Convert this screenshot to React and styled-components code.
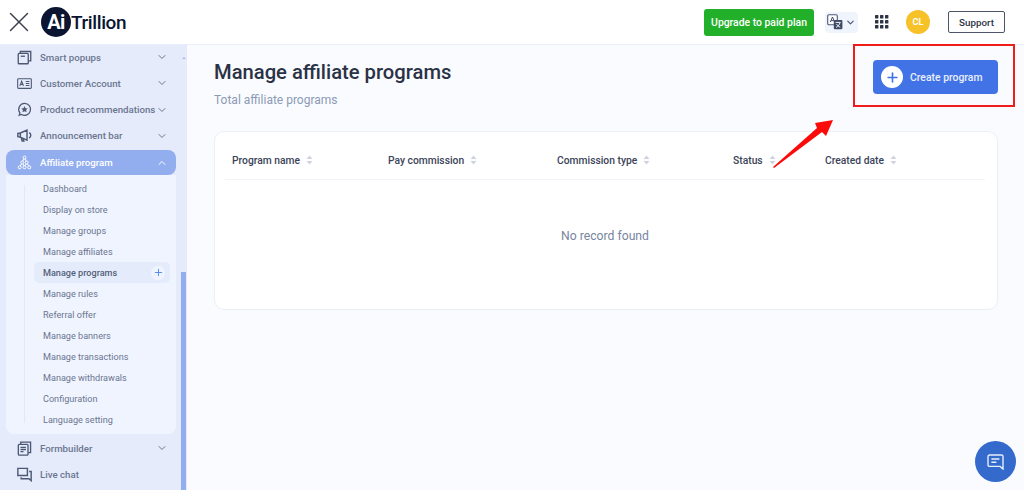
import React from "react";
import styled, { createGlobalStyle } from "styled-components";
import { ChevronDown, ChevronUp, Plus, X } from "lucide-react";

const GlobalStyle = createGlobalStyle`
  html, body {
    margin: 0;
    padding: 0;
    height: 490px;
    overflow: hidden;
    background: #fafbff;
    font-family: Roboto, "Liberation Sans", sans-serif;
  }
`;

const subItems = [
  "Dashboard",
  "Display on store",
  "Manage groups",
  "Manage affiliates",
  "Manage programs",
  "Manage rules",
  "Referral offer",
  "Manage banners",
  "Manage transactions",
  "Manage withdrawals",
  "Configuration",
  "Language setting"
];

const columns = [
  { label: "Program name", width: 156 },
  { label: "Pay commission", width: 169 },
  { label: "Commission type", width: 176 },
  { label: "Status", width: 92 },
  { label: "Created date", width: 150 }
];

const PopupIcon = () => (
  <svg viewBox="0 0 18 18" fill="none" stroke="#4d5874" strokeWidth="1.6">
    <rect x="1.5" y="4" width="12" height="12.5" rx="1" />
    <path d="M4 4V1.8h12.5V13h-3" />
    <path d="M4.5 7.5h5" />
  </svg>
);

const AccountIcon = () => (
  <svg viewBox="0 0 18 18" fill="none" stroke="#4d5874" strokeWidth="1.3">
    <rect x="0.8" y="3.2" width="16.4" height="11.6" rx="1" />
    <path d="M3.4 11.8 5.6 6.2l2.2 5.6M4.2 10h2.8M10.5 6.6h4.4M10.5 9h4.4M10.5 11.4h4.4" />
  </svg>
);

const StarBubbleIcon = () => (
  <svg viewBox="0 0 18 18" fill="none" stroke="#4d5874" strokeWidth="1.5">
    <path d="M9 1.6a7.2 7.2 0 1 1-3.6 13.4L2.6 16l.9-2.9A7.2 7.2 0 0 1 9 1.6Z" />
    <path fill="#4d5874" stroke="none" d="m9 4.8 1.2 2.6 2.8.3-2.1 1.9.6 2.8L9 11l-2.5 1.4.6-2.8L5 7.7l2.8-.3Z" />
  </svg>
);

const MegaphoneIcon = () => (
  <svg viewBox="0 0 18 18" fill="none" stroke="#4d5874" strokeWidth="1.7">
    <path d="M1 6.5v4l3 .5V6ZM4 6l8-3.5v12L4 11" />
    <path d="m5 11.2 1.2 4.3h2l-1-3.4" />
    <path d="M14.5 5.5a3.6 3.6 0 0 1 0 6.5" />
  </svg>
);

const NetworkIcon = () => (
  <svg viewBox="0 0 20 20" fill="none" stroke="#fff" strokeWidth="1.3">
    <circle cx="10" cy="3.4" r="2" />
    <circle cx="7" cy="10" r="2" />
    <circle cx="13" cy="10" r="2" />
    <circle cx="3.6" cy="16.4" r="2" />
    <circle cx="10" cy="16.4" r="2" />
    <circle cx="16.4" cy="16.4" r="2" />
    <path d="M9 5.2 7.8 8.2M11 5.2l1.2 3M6 11.8l-1.4 2.9M8 11.8l1.4 2.9M12 11.8l-1.4 2.9M14 11.8l1.4 2.9" />
  </svg>
);

const FormIcon = () => (
  <svg viewBox="0 0 18 18" fill="none" stroke="#4d5874" strokeWidth="1.6">
    <rect x="1.6" y="4" width="11.6" height="13" rx="1" />
    <path d="M4.5 4V1.4h11.8V14h-3" />
    <path d="M4.2 7.6h6.5M4.2 10.2h6.5M4.2 12.8h3.6" />
  </svg>
);

const ChatIcon = () => (
  <svg viewBox="0 0 18 18" fill="none" stroke="#4d5874" strokeWidth="1.7">
    <path d="M1 1.6h11.5v8.6H1Z" />
    <path d="M14.6 5.4h2.4v11l-2.6-2.4H5v-1.6" />
  </svg>
);

const TranslateIcon = () => (
  <svg width="16" height="16" viewBox="0 0 16 16">
    <rect x="0.7" y="0.7" width="9.6" height="10" rx="1.2" fill="#fff" stroke="#4d5874" strokeWidth="1.1" />
    <rect x="6.8" y="6" width="8.6" height="9.2" rx="1" fill="#3f4a66" />
    <path d="M3.4 8 5.5 3l2.1 5M4.2 6.6h2.6" fill="none" stroke="#3f4a66" strokeWidth="1" />
    <path d="M8.6 8.4h5M11 8v.6M13 8.6c-.6 2.4-2.2 4-4 4.8M9.6 10c.6 1.4 2 2.6 3.6 3.2" fill="none" stroke="#fff" strokeWidth="0.9" />
  </svg>
);

const GridIcon = () => (
  <svg width="14" height="14" viewBox="0 0 14 14" fill="#2d3446">
    {[0, 5, 10].map(y =>
      [0, 5, 10].map(x => <rect key={`${x}-${y}`} x={x} y={y} width="3.4" height="3.4" rx="0.5" />)
    )}
  </svg>
);

const SortIcon = () => (
  <svg width="7" height="10" viewBox="0 0 7 10" fill="#ced4df">
    <path d="M3.5 0.5 6.5 4H.5ZM3.5 9.5.5 6h6Z" />
  </svg>
);

const MessageIcon = () => (
  <svg width="17" height="16" viewBox="0 0 17 16" fill="none" stroke="#e7eefc" strokeWidth="1.4">
    <path d="M2.6 1h11.8a1.6 1.6 0 0 1 1.6 1.6V15l-3-2.6H2.6A1.6 1.6 0 0 1 1 10.8V2.6A1.6 1.6 0 0 1 2.6 1Z" />
    <path d="M4.4 5h8M4.4 8.2h5" />
  </svg>
);

const ArrowDrawing = () => (
  <svg width="62" height="50" viewBox="0 0 62 50">
    <path fill="#fb0a0a" d="M0 48 44 9 42 4 60 1 53 17 49 13 1 49Z" />
  </svg>
);

const NavRow = ({ icon, label, open, active }) => (
  <NavItem $active={active}>
    <NavIcon>{icon}</NavIcon>
    <NavLabel $active={active}>{label}</NavLabel>
    {open === undefined ? null : open ? (
      <ChevronUp size={12} color="#fff" />
    ) : (
      <ChevronDown size={12} color="#6b7690" />
    )}
  </NavItem>
);

export default function App() {
  return (
    <>
      <GlobalStyle />
      <Page>
        <Header>
          <Brand>
            <X size={34} color="#3a3f4b" strokeWidth={1} />
            <Logo>
              <LogoBadge>Ai</LogoBadge>
              <LogoText>Trillion</LogoText>
            </Logo>
          </Brand>
          <HeaderActions>
            <UpgradeButton>Upgrade to paid plan</UpgradeButton>
            <LangButton>
              <TranslateIcon />
              <ChevronDown size={11} color="#4d5874" strokeWidth={2.5} />
            </LangButton>
            <GridSlot>
              <GridIcon />
            </GridSlot>
            <Avatar>CL</Avatar>
            <SupportButton>Support</SupportButton>
          </HeaderActions>
        </Header>
        <Body>
          <Sidebar>
            <Nav>
              <NavRow icon={<PopupIcon />} label="Smart popups" open={false} />
              <NavRow icon={<AccountIcon />} label="Customer Account" open={false} />
              <NavRow icon={<StarBubbleIcon />} label="Product recommendations" open={false} />
              <NavRow icon={<MegaphoneIcon />} label="Announcement bar" open={false} />
              <NavRow icon={<NetworkIcon />} label="Affiliate program" open active />
              <SubMenu>
                {subItems.map(item => (
                  <SubItem key={item} $current={item === "Manage programs"}>
                    {item}
                    {item === "Manage programs" && (
                      <SubAdd>
                        <Plus size={11} color="#4f86ee" strokeWidth={2} />
                      </SubAdd>
                    )}
                  </SubItem>
                ))}
              </SubMenu>
              <NavRow icon={<FormIcon />} label="Formbuilder" open={false} />
              <NavRow icon={<ChatIcon />} label="Live chat" />
            </Nav>
            <ScrollTrack>
              <ScrollUp />
              <ScrollThumb />
            </ScrollTrack>
          </Sidebar>
          <Main>
            <TitleRow>
              <div>
                <Title>Manage affiliate programs</Title>
                <Subtitle>Total affiliate programs</Subtitle>
              </div>
              <CreateButton>
                <CreateIcon>
                  <Plus size={15} color="#4273e6" strokeWidth={2.6} />
                </CreateIcon>
                Create program
              </CreateButton>
            </TitleRow>
            <Card>
              <TableHead>
                {columns.map(col => (
                  <HeadCell key={col.label} $width={col.width}>
                    {col.label}
                    <SortIcon />
                  </HeadCell>
                ))}
              </TableHead>
              <Empty>No record found</Empty>
            </Card>
          </Main>
        </Body>
        <Callout />
        <Arrow>
          <ArrowDrawing />
        </Arrow>
        <ChatBubble>
          <MessageIcon />
        </ChatBubble>
      </Page>
    </>
  );
}

const Page = styled.div`
  position: relative;
  width: 1024px;
  height: 490px;
  overflow: hidden;
  display: flex;
  flex-direction: column;
`;

const Header = styled.header`
  flex: 0 0 45px;
  height: 45px;
  box-sizing: border-box;
  background: #fff;
  border-bottom: 1px solid #e8edfa;
  display: flex;
  align-items: center;
  justify-content: space-between;
  padding: 0 19px 0 2px;
`;

const Brand = styled.div`
  display: flex;
  align-items: center;
  gap: 5px;
`;

const Logo = styled.div`
  display: flex;
  align-items: center;
`;

const LogoBadge = styled.div`
  width: 30px;
  height: 30px;
  border-radius: 50%;
  background: #0b1430;
  color: #fff;
  font-size: 20px;
  font-weight: 700;
  display: flex;
  align-items: center;
  justify-content: center;
  letter-spacing: -0.5px;
`;

const LogoText = styled.span`
  font-size: 19px;
  font-weight: 500;
  color: #0b1430;
  letter-spacing: -0.4px;
`;

const HeaderActions = styled.div`
  display: flex;
  align-items: center;
`;

const UpgradeButton = styled.button`
  height: 27px;
  width: 110px;
  margin-right: 11px;
  padding: 0;
  border: 0;
  border-radius: 3px;
  background: #22b02a;
  color: #fff;
  font: 500 10.4px Roboto, sans-serif;
`;

const LangButton = styled.div`
  width: 33px;
  height: 21px;
  border-radius: 4px;
  background: #f0f4fd;
  display: flex;
  align-items: center;
  justify-content: center;
  gap: 2px;
  margin-right: 17px;
`;

const GridSlot = styled.div`
  display: flex;
  margin-right: 17px;
`;

const Avatar = styled.div`
  width: 24px;
  height: 24px;
  border-radius: 50%;
  background: #f6c228;
  color: #fff;
  font-size: 9px;
  font-weight: 700;
  display: flex;
  align-items: center;
  justify-content: center;
  margin-right: 18px;
`;

const SupportButton = styled.button`
  width: 57px;
  height: 22px;
  padding: 0;
  background: #fff;
  border: 1px solid #4d5568;
  border-radius: 2px;
  color: #2d3446;
  font: 500 9.8px Roboto, sans-serif;
`;

const Body = styled.div`
  flex: 1;
  display: flex;
  min-height: 0;
`;

const Sidebar = styled.aside`
  flex: 0 0 187px;
  position: relative;
  background: #e5ebfb;
  overflow: hidden;
`;

const Nav = styled.nav`
  width: 170px;
  margin: -1px 0 0 6px;
  display: flex;
  flex-direction: column;
`;

const NavItem = styled.div`
  flex: 0 0 ${p => (p.$active ? "25px" : "26.25px")};
  margin-top: ${p => (p.$active ? "1px" : "0")};
  box-sizing: border-box;
  display: flex;
  align-items: center;
  padding: 0 8px 0 11px;
  border-radius: ${p => (p.$active ? "8px" : "0")};
  background: ${p => (p.$active ? "#92aeee" : "transparent")};
`;

const NavIcon = styled.span`
  width: 15px;
  height: 15px;
  display: flex;
  margin-right: 8px;
  flex: none;
`;

const NavLabel = styled.span`
  flex: 1;
  font-size: 9.7px;
  font-weight: 500;
  white-space: nowrap;
  color: ${p => (p.$active ? "#fff" : "#6b7690")};
`;

const SubMenu = styled.div`
  position: relative;
  background: #f0f4ff;
  border-radius: 0 0 8px 8px;
  height: 259px;
  box-sizing: border-box;
  padding: 3.4px 6px 0 37px;
  margin-bottom: 1px;

  &::before {
    content: "";
    position: absolute;
    left: 18px;
    top: 10px;
    bottom: 11px;
    width: 1px;
    background: #e1e8fa;
  }
`;

const SubItem = styled.div`
  height: 21px;
  display: flex;
  align-items: center;
  justify-content: space-between;
  margin-left: ${p => (p.$current ? "-9px" : "0")};
  padding: ${p => (p.$current ? "0 5px 0 9px" : "0")};
  box-sizing: border-box;
  font-size: 9.1px;
  font-weight: ${p => (p.$current ? 500 : 400)};
  color: ${p => (p.$current ? "#545f78" : "#6b7690")};
  background: ${p => (p.$current ? "#e4ecfc" : "transparent")};
  border-radius: 5px;
`;

const SubAdd = styled.span`
  width: 14px;
  height: 14px;
  border-radius: 50%;
  background: #f0f4ff;
  display: flex;
  align-items: center;
  justify-content: center;
`;

const ScrollTrack = styled.div`
  position: absolute;
  top: 0;
  right: 1px;
  bottom: 0;
  width: 5px;
`;

const ScrollUp = styled.div`
  position: absolute;
  top: 12px;
  left: 1px;
  border-left: 2px solid transparent;
  border-right: 2px solid transparent;
  border-bottom: 2px solid #a9bcee;
`;

const ScrollThumb = styled.div`
  position: absolute;
  top: 227px;
  bottom: 0;
  left: 0;
  width: 5px;
  background: #92aeee;
`;

const Main = styled.main`
  flex: 1;
  padding: 0 26px 0 27px;
  min-width: 0;
`;

const TitleRow = styled.div`
  display: flex;
  justify-content: space-between;
  align-items: flex-start;
  height: 86px;
  padding-top: 15px;
  box-sizing: border-box;
`;

const Title = styled.h1`
  margin: 0;
  font-size: 20.2px;
  line-height: 24px;
  font-weight: 500;
  color: #2a3245;
`;

const Subtitle = styled.p`
  margin: 8px 0 0;
  font-size: 12px;
  line-height: 16px;
  color: #8b9ab5;
`;

const CreateButton = styled.button`
  width: 125px;
  height: 34px;
  padding: 0 0 0 8px;
  border: 0;
  border-radius: 4px;
  background: #4273e6;
  color: #e9effc;
  font: 500 10.4px Roboto, sans-serif;
  display: flex;
  align-items: center;
  gap: 7px;
`;

const CreateIcon = styled.span`
  width: 22px;
  height: 22px;
  border-radius: 50%;
  background: #fff;
  display: flex;
  align-items: center;
  justify-content: center;
`;

const Card = styled.section`
  height: 179px;
  box-sizing: border-box;
  background: #fff;
  border: 1px solid #eceff6;
  border-radius: 10px;
  padding: 0 12px 0 10px;
`;

const TableHead = styled.div`
  display: flex;
  height: 48px;
  box-sizing: border-box;
  align-items: center;
  padding: 9px 0 0 7px;
  border-bottom: 1px solid #f2f4f9;
`;

const HeadCell = styled.div`
  flex: 0 0 ${p => p.$width}px;
  display: flex;
  align-items: center;
  gap: 6px;
  font-size: 10.3px;
  font-weight: 500;
  color: #3b4459;
`;

const Empty = styled.div`
  text-align: center;
  margin-top: 48px;
  font-size: 12.2px;
  line-height: 16px;
  color: #78859f;
`;

const Callout = styled.div`
  position: absolute;
  left: 853px;
  top: 44px;
  width: 162px;
  height: 63px;
  box-sizing: border-box;
  border: 2px solid #f01c1c;
`;

const Arrow = styled.div`
  position: absolute;
  left: 773px;
  top: 119px;
  display: flex;
`;

const ChatBubble = styled.div`
  position: absolute;
  left: 975px;
  top: 441px;
  width: 41px;
  height: 41px;
  border-radius: 50%;
  background: #336acb;
  display: flex;
  align-items: center;
  justify-content: center;
`;
